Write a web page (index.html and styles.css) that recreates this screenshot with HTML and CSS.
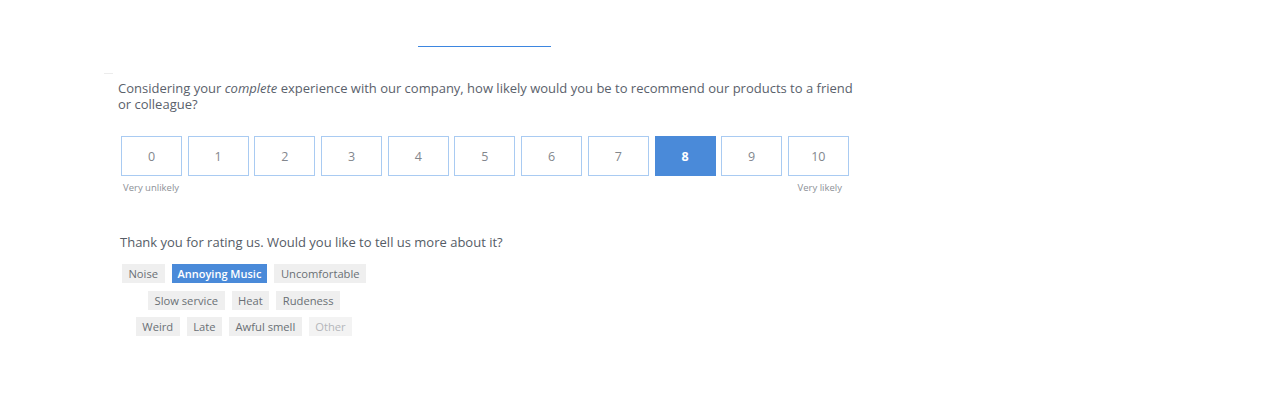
FILE: index.html
```html
<!DOCTYPE html>
<html>
<head>
<meta charset="utf-8">
<link rel="stylesheet" href="styles.css">
</head>
<body>
<div class="topline"></div>
<div class="dash"></div>
<p class="question">Considering your <em>complete</em> experience with our company, how likely would you be to recommend our products to a friend or colleague?</p>
<div class="scale">
  <div class="box">0</div>
  <div class="box">1</div>
  <div class="box">2</div>
  <div class="box">3</div>
  <div class="box">4</div>
  <div class="box">5</div>
  <div class="box">6</div>
  <div class="box">7</div>
  <div class="box selected">8</div>
  <div class="box">9</div>
  <div class="box">10</div>
</div>
<div class="labels"><span>Very unlikely</span><span>Very likely</span></div>
<p class="thanks">Thank you for rating us. Would you like to tell us more about it?</p>
<div class="tags">
  <div class="row"><span class="tag">Noise</span><span class="tag active">Annoying Music</span><span class="tag">Uncomfortable</span></div>
  <div class="row"><span class="tag">Slow service</span><span class="tag">Heat</span><span class="tag">Rudeness</span></div>
  <div class="row"><span class="tag">Weird</span><span class="tag">Late</span><span class="tag">Awful smell</span><span class="tag muted">Other</span></div>
</div>
</body>
</html>
```
FILE: styles.css
```css
html, body {
  margin: 0;
  padding: 0;
  background: #ffffff;
}
body {
  font-family: "Open Sans", "Noto Sans", sans-serif;
  color: #5f6670;
}
.topline {
  margin-top: 46px;
  margin-left: 418px;
  width: 133px;
  height: 1px;
  background: #3d86e0;
}
.dash {
  margin-top: 26px;
  margin-left: 104px;
  width: 9px;
  height: 1px;
  background: #ececec;
}
.question {
  margin: 6px 0 0 118px;
  width: 745px;
  font-size: 13px;
  line-height: 16px;
  color: #5a616b;
}
.scale {
  margin: 24px 0 0 121px;
  display: flex;
  gap: 5.7px;
}
.box {
  box-sizing: border-box;
  width: 61px;
  height: 40px;
  border: 1px solid #a9cbf2;
  display: flex;
  align-items: center;
  justify-content: center;
  font-size: 12.5px;
  color: #83878d;
}
.box.selected {
  background: #4a8ad9;
  border-color: #4a8ad9;
  color: #ffffff;
  font-weight: 700;
}
.labels {
  margin: 6px 0 0 123px;
  width: 719px;
  display: flex;
  justify-content: space-between;
  font-size: 9.5px;
  line-height: 12px;
  color: #8d9197;
}
.thanks {
  margin: 40px 0 0 120px;
  font-size: 13px;
  line-height: 16px;
  color: #555c66;
}
.tags {
  margin: 14px 0 0 114px;
  width: 260px;
  display: flex;
  flex-direction: column;
  gap: 7.5px;
}
.row {
  display: flex;
  justify-content: center;
  gap: 7px;
}
.tag {
  flex-shrink: 0;
  white-space: nowrap;
  height: 19px;
  line-height: 19px;
  padding: 0 6.5px;
  font-size: 11.2px;
  background: #efefef;
  color: #6a6f75;
}
.tag.active {
  background: #4a8ad9;
  color: #ffffff;
  font-weight: 600;
  padding: 0 6px;
  font-size: 11px;
}
.tag.muted {
  background: #f3f3f3;
  color: #b3b6ba;
}
```
